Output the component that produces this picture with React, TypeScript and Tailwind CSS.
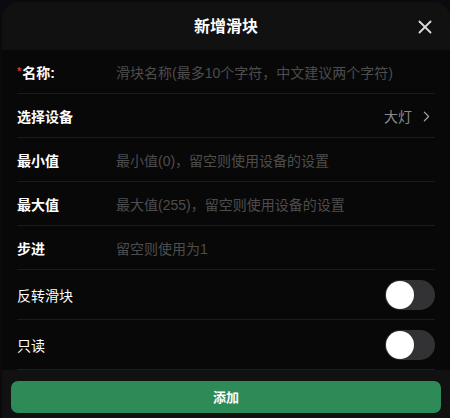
import { ChevronRight, X } from "lucide-react";

const font = { fontFamily: '"Liberation Sans", "Noto Sans CJK SC", sans-serif' };

function InputRow({ label, placeholder, required }: { label: string; placeholder: string; required?: boolean }) {
  return (
    <div className="flex h-[44px] items-center border-b border-[#1c1c1c] pt-[4px]">
      <div className="w-[99px] shrink-0 text-[14px] font-bold text-white">
        {required && <span className="mr-[1px] align-top text-[11px] text-[#d9363e]">*</span>}
        {label}
      </div>
      <div className="flex-1 text-[14px] text-[#4d4d4d]">{placeholder}</div>
    </div>
  );
}

function SwitchRow({ label }: { label: string }) {
  return (
    <div className="flex h-[50px] items-center justify-between border-b border-[#1c1c1c]">
      <div className="pt-[4px] text-[14px] text-white">{label}</div>
      <div className="flex h-[30px] w-[50px] items-center rounded-full bg-[#323234] pl-[1px]">
        <div className="h-[28px] w-[28px] rounded-full bg-white" />
      </div>
    </div>
  );
}

export default function App() {
  return (
    <div className="h-[418px] w-[450px] overflow-hidden bg-[#0c0a0e] pl-[2px] pt-[2px]" style={font}>
      <div className="flex h-[416px] flex-col overflow-hidden rounded-t-[16px] bg-[#080808]">
        <div className="relative flex h-[48px] shrink-0 items-center justify-center bg-[#111111] pt-[2px]">
          <span className="text-[16px] font-bold text-white">新增滑块</span>
          <X className="absolute right-[14px] top-[14px] text-[#dcdcdc]" size={22} strokeWidth={2} />
        </div>
        <div className="flex-1 px-[15px]">
          <InputRow label="名称:" placeholder="滑块名称(最多10个字符，中文建议两个字符)" required />
          <div className="flex h-[44px] items-center justify-between border-b border-[#1c1c1c] pt-[4px]">
            <div className="text-[14px] font-bold text-white">选择设备</div>
            <div className="flex items-center gap-[6px] text-[14px] text-[#8a8a8a]">
              大灯
              <ChevronRight size={17} strokeWidth={1.75} className="-mt-[3px] text-[#9a9a9a]" />
            </div>
          </div>
          <InputRow label="最小值" placeholder="最小值(0)，留空则使用设备的设置" />
          <InputRow label="最大值" placeholder="最大值(255)，留空则使用设备的设置" />
          <InputRow label="步进" placeholder="留空则使用为1" />
          <SwitchRow label="反转滑块" />
          <SwitchRow label="只读" />
        </div>
        <div className="shrink-0 bg-[#111111] px-[9px] pb-[6px] pt-[11px]">
          <button className="flex h-[32px] w-full items-center justify-center rounded-[7px] bg-[#2e8b57] pt-[2px] text-[13px] font-bold text-white">
            添加
          </button>
        </div>
      </div>
    </div>
  );
}
